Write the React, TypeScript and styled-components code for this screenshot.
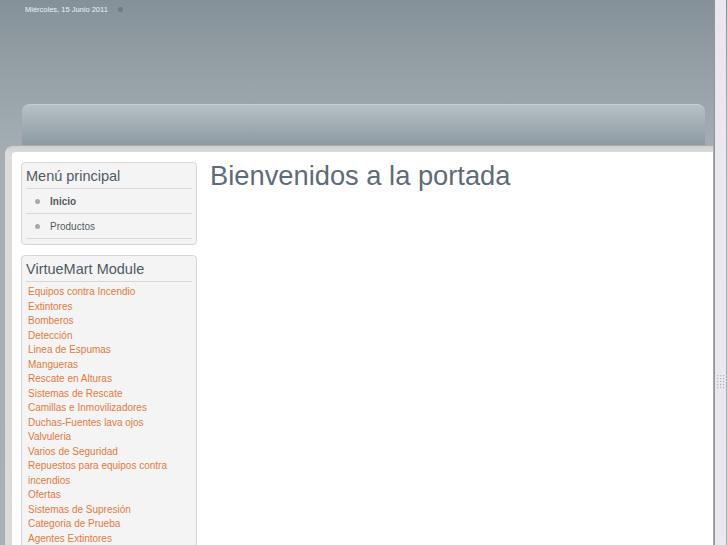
import React from "react";
import styled, { createGlobalStyle } from "styled-components";

const Global = createGlobalStyle`
  html, body { margin: 0; padding: 0; height: 100%; }
  body {
    font-family: "Liberation Sans", Arial, sans-serif;
    background: linear-gradient(180deg, #859198 0%, #97a2a8 80px, #a3adb3 150px, #a7b1b6 100%);
    overflow: hidden;
  }
`;

const Page = styled.div`
  display: flex;
  height: 545px;
  width: 727px;
  overflow: hidden;
`;

const MainCol = styled.div`
  width: 714px;
  display: flex;
  flex-direction: column;
  min-height: 0;
`;

const TopBar = styled.div`
  flex-shrink: 0;
  height: 19px;
  padding: 0 0 1px 25px;
  display: flex;
  align-items: center;
  gap: 10px;
  font-size: 7.5px;
  color: #eef2f4;
`;

const PrintDot = styled.span`
  width: 5px;
  height: 5px;
  border-radius: 50%;
  background: #6d7a82;
  display: inline-block;
`;

const HeaderTab = styled.div`
  flex-shrink: 0;
  margin: 84px 0 0 22px;
  width: 683px;
  height: 40px;
  border-radius: 8px 8px 0 0;
  border-top: 1px solid #c7cfd3;
  background: linear-gradient(180deg, #b6c0c5 0%, #a2adb3 50%, #8d9aa1 100%);
`;

const Panel = styled.div`
  margin-left: 4px;
  flex: 1;
  min-height: 0;
  overflow: hidden;
  border: 1px solid #a9adb0;
  border-bottom: none;
  border-radius: 9px 0 0 0;
  background: linear-gradient(180deg, #cfd0d0 0px, #dcdcdc 7px, #dadada 100%);
  padding: 6px 0 0 7px;
  display: flex;
`;

const Inner = styled.div`
  flex: 1;
  background: #ffffff;
  border-radius: 4px 0 0 0;
  display: flex;
  gap: 13px;
  padding: 10px 0 0 9px;
  overflow: hidden;
`;

const Sidebar = styled.div`
  width: 176px;
  display: flex;
  flex-direction: column;
  gap: 10px;
  flex-shrink: 0;
`;

const Module = styled.div`
  flex-shrink: 0;
  background: #f4f4f4;
  border: 1px solid #d6d6d6;
  border-radius: 4px;
  padding: 0 4px 5px 4px;
`;

const ModuleTitle = styled.h3`
  margin: 0;
  font-weight: normal;
  font-size: 14.5px;
  color: #4f5a64;
  height: 25px;
  line-height: 26px;
  border-bottom: 1px solid #d8d8d8;
`;

const MenuItem = styled.div<{ $active?: boolean }>`
  height: 24px;
  border-bottom: 1px solid #d8d8d8;
  display: flex;
  align-items: center;
  font-size: 10px;
  color: #555a5e;
  font-weight: ${(p) => (p.$active ? "bold" : "normal")};
  padding-left: 9px;
  gap: 10px;
`;

const Bullet = styled.span`
  width: 5px;
  height: 5px;
  border-radius: 50%;
  background: #a6a9ab;
  display: inline-block;
`;

const LinkList = styled.div`
  padding: 3px 0 0 2px;
  display: flex;
  flex-direction: column;
`;

const CatLink = styled.a`
  font-size: 10px;
  line-height: 14.5px;
  color: #e37a3d;
  text-decoration: none;
`;

const Content = styled.div`
  flex: 1;
`;

const Heading = styled.h1`
  margin: 0;
  font-weight: normal;
  font-size: 27.3px;
  line-height: 28px;
  color: #5e6b7b;
`;

const Strip = styled.div`
  width: 12px;
  border-left: 1px solid #8f9497;
  background: #e8e8ee;
  display: flex;
  align-items: center;
  justify-content: center;
  padding-top: 220px;
  box-sizing: border-box;
`;

const categories = [
  "Equipos contra Incendio",
  "Extintores",
  "Bomberos",
  "Detección",
  "Linea de Espumas",
  "Mangueras",
  "Rescate en Alturas",
  "Sistemas de Rescate",
  "Camillas e Inmovilizadores",
  "Duchas-Fuentes lava ojos",
  "Valvuleria",
  "Varios de Seguridad",
  "Repuestos para equipos contra incendios",
  "Ofertas",
  "Sistemas de Supresión",
  "Categoria de Prueba",
  "Agentes Extintores",
];

export default function App() {
  return (
    <>
      <Global />
      <Page>
        <MainCol>
          <TopBar>
            <span>Miércoles, 15 Junio 2011</span>
            <PrintDot />
          </TopBar>
          <HeaderTab />
          <Panel>
            <Inner>
              <Sidebar>
                <Module>
                  <ModuleTitle>Menú principal</ModuleTitle>
                  <MenuItem $active>
                    <Bullet />
                    Inicio
                  </MenuItem>
                  <MenuItem>
                    <Bullet />
                    Productos
                  </MenuItem>
                </Module>
                <Module>
                  <ModuleTitle>VirtueMart Module</ModuleTitle>
                  <LinkList>
                    {categories.map((c) => (
                      <CatLink key={c} href="#">
                        {c}
                      </CatLink>
                    ))}
                  </LinkList>
                </Module>
              </Sidebar>
              <Content>
                <Heading>Bienvenidos a la portada</Heading>
              </Content>
            </Inner>
          </Panel>
        </MainCol>
        <Strip>
          <svg width="8" height="16" viewBox="0 0 8 16">
            {[0, 1, 2, 3, 4].map((r) =>
              [0, 1, 2].map((c) => (
                <rect key={`${r}-${c}`} x={c * 3} y={r * 3} width="1.2" height="1.2" fill="#b5b7bd" />
              ))
            )}
          </svg>
        </Strip>
      </Page>
    </>
  );
}
